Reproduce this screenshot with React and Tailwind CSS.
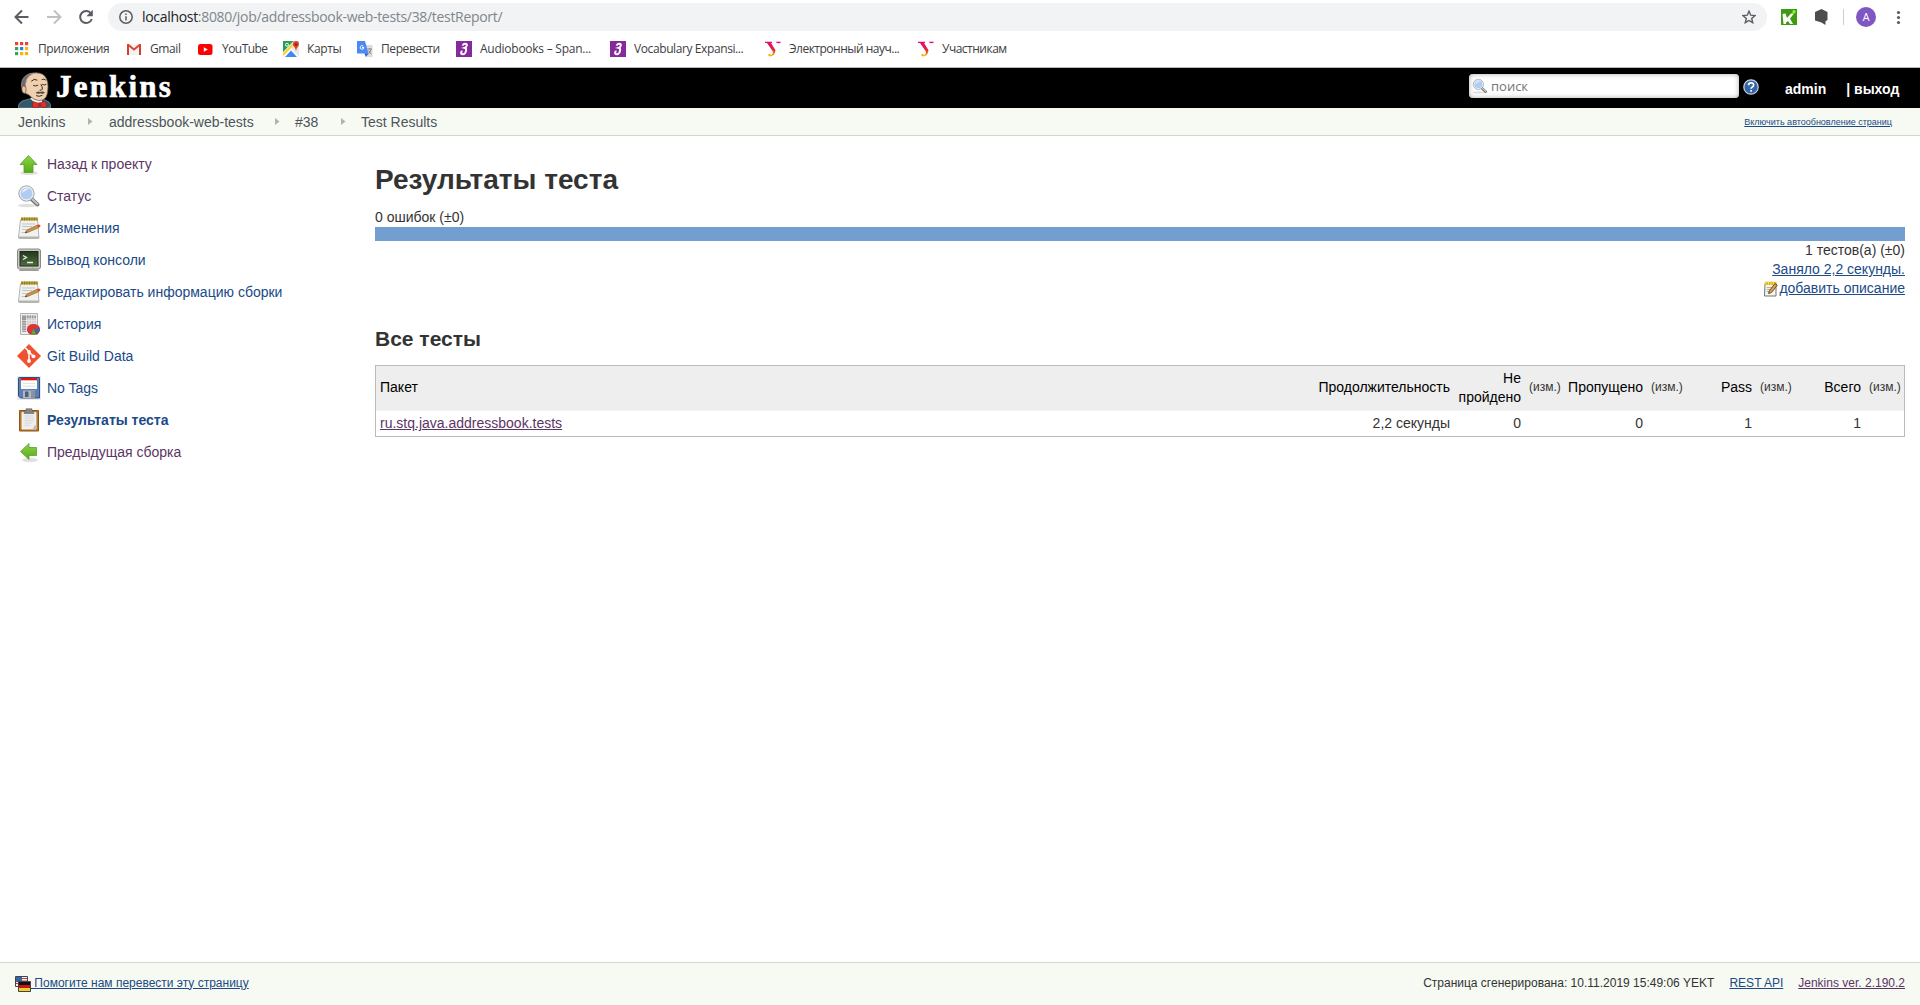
import React from 'react';

const G = ({ s = 24, w, h, vb, children, className = '' }) => (
  <svg width={w || s} height={h || s} viewBox={vb || `0 0 ${w || s} ${h || s}`} className={`block shrink-0 ${className}`}>{children}</svg>
);

/* ---------- sidebar icons ---------- */
const UpArrow = () => (
  <G>
    <ellipse cx="12" cy="21" rx="9" ry="2" fill="#000" opacity=".12" />
    <path d="M11.500 3.500 20 12.500h-4v8H7v-8H3z" fill="url(#green)" stroke="#55a020" strokeWidth=".8" />
  </G>
);
const LeftArrow = () => (
  <G>
    <ellipse cx="13" cy="20" rx="8" ry="2" fill="#000" opacity=".12" />
    <path d="M3.500 11.500 12 3.500v4h7.500v8H12v4z" fill="url(#green)" stroke="#5a9c35" strokeWidth=".8" />
  </G>
);
const Magnifier = ({ s = 24 }) => (
  <G s={s} vb="0 0 24 24">
    <ellipse cx="10" cy="21.500" rx="9" ry="1.800" fill="#000" opacity=".12" />
    <path d="m14.500 15 6 5.500" stroke="#777" strokeWidth="4" strokeLinecap="round" />
    <path d="m15 15 5.500 5" stroke="#c4c4c4" strokeWidth="1.800" strokeLinecap="round" />
    <circle cx="9.500" cy="9.500" r="7.600" fill="#b9d3f0" stroke="#8f8f8f" strokeWidth="1" />
    <circle cx="9.500" cy="9.500" r="6.500" fill="#aecdf0" stroke="#eee" strokeWidth="1.300" />
    <path d="M5 9a5 5 0 0 1 7-4.200C9 6 7 8 5 9z" fill="#e6f1fc" />
  </G>
);
const Notepad = () => (
  <G>
    <path d="M3.500 3.500h17l1.500 18q0 1-1 1H2.500q-1 0-1-1z" fill="#f1f1ef" stroke="#b5b5b0" />
    <path d="M1.500 20.500h20.500v2H1.500z" fill="#b5b5b0" />
    <path d="M4 1.500h16.500v3H4z" fill="#b39c2c" />
    <path d="M5 1.500v3M7.500 1.500v3M10 1.500v3M12.500 1.500v3M15 1.500v3M17.500 1.500v3M20 1.500v3" stroke="#8f7c1c" />
    <path d="M5 8h13M5 10.500h10M5 13.500h6M4.500 16.500h4" stroke="#c5c5c2" />
    <path d="m8 17 2-3L20.500 9l1.500 2.500L11 16.300z" fill="#cf9440" stroke="#8a6a3a" strokeWidth=".7" />
    <path d="m20 9.200 1.800-.8q2 0 1.700 2l-2 1z" fill="#e0452c" />
    <path d="m8 17 1-1.800 1.300 1z" fill="#333" />
  </G>
);
const SmallNotepad = () => (
  <G s={16}>
    <path d="M2 2.500h11v12.500H1.500z" fill="#f4f4f2" stroke="#77776f" />
    <path d="M2 .8h11.500V4H2z" fill="#e0b818" />
    <path d="M3 .8v3M5.500.8v3M8 .8v3M10.500.8v3M13 .8v3" stroke="#f7dc5a" strokeWidth=".9" />
    <path d="M3.500 6.500h7M3.500 8.500h5M3.500 10.500h3" stroke="#b5b5b2" />
    <path d="m5.500 12.500.8-2.700L12 2.500l2.300 1.700-5.800 7.300z" fill="#d5a253" stroke="#5d4218" strokeWidth=".9" />
  </G>
);
const Terminal = () => (
  <G>
    <rect x=".5" y="1" width="23" height="20" rx="2" fill="#c9c9c4" stroke="#8a8a86" />
    <path d="M3 21h18l1 2H2z" fill="#9e9e99" />
    <rect x="3" y="3.500" width="18" height="14.500" fill="url(#term)" stroke="#1f2a1a" />
    <path d="m6 7.500 3.500 2L6 11.500M10 14.500h6" stroke="#e8efe2" strokeWidth="1.300" fill="none" />
    <path d="M15.500 20h1.500" stroke="#6cce20" />
  </G>
);
const History = () => (
  <G>
    <path d="M3.500 1.500h17v21h-17z" fill="#ededed" stroke="#b0b0ad" />
    <path d="M5 3.500h14v16H5z" fill="#cbcbc9" />
    <path d="M5 4h4v16H5zM5 3.500h14v2.500H5z" fill="#8f8f8d" opacity=".8" />
    <path d="M5 8.500h14M5 11h14M5 13.500h14M5 16h14M5 18.500h14M9.500 3v17M12 3v17M14.500 3v17M17 3v17" stroke="#f1f1f0" strokeWidth=".6" />
    <path d="M10 17q0 5.500 6.500 5.500t6.500-5.500" fill="#a11515" />
    <ellipse cx="16.500" cy="17" rx="6.500" ry="5" fill="#e03434" />
    <path d="m16.500 17 6.500-.5q0 4-4 5z" fill="#3a67ad" />
    <path d="m16.500 17 2.500 5q-3 .8-5 0z" fill="#5eac22" />
  </G>
);
const Git = () => (
  <G>
    <path d="m12 .2 11.800 11.800L12 23.800.2 12z" fill="#f05133" stroke="#f05133" strokeLinejoin="round" strokeWidth=".4" />
    <path d="m8.200 3.800 3.800 3.800v9M12 8l4.300 4.300" stroke="#fff" strokeWidth="1.500" fill="none" />
    <circle cx="12" cy="7.900" r="1.900" fill="#fff" /><circle cx="12" cy="17" r="1.900" fill="#fff" /><circle cx="16.500" cy="12.300" r="1.900" fill="#fff" />
  </G>
);
const Floppy = () => (
  <G>
    <path d="M0 0h24v24H0z" fill="#e9e9ec" />
    <path d="M2 1.500h20.500v20.500H3.500L1.500 20V2z" fill="#5b80b5" stroke="#2f4f80" />
    <path d="M4 2h16v11H4z" fill="#fafafa" />
    <path d="M4 2h16v2.300H4z" fill="#d8190c" />
    <path d="M6 7.500h12M6 10.300h12" stroke="#dedede" strokeWidth=".8" />
    <path d="M6 14.500h12V22H6z" fill="#b3b7bd" /><path d="M8 15.500h3.500v5.500H8z" fill="#4a5f80" /><path d="M14 15h4v7h-4z" fill="#8e9298" />
  </G>
);
const Clipboard = () => (
  <G>
    <path d="M2.500 2.500h19v20.500h-19z" fill="#b8792b" stroke="#8b5715" />
    <path d="M5 4.500h14V21H5z" fill="#ededed" stroke="#fafafa" strokeWidth=".8" />
    <path d="M7.500 8h9M7.500 10.300h9M7.500 12.600h9M7.500 15h7M7.500 17.300h5" stroke="#d6d6d6" />
    <path d="M19.500 17v4.500H14q3-1 3-3.500z" fill="#bcbcbc" />
    <path d="M7 5.500q0-2.500 2-2.800V.8h6v1.900q2 .3 2 2.800z" fill="#81837e" stroke="#62645f" strokeWidth=".6" />
  </G>
);

const tasks = [
  { icon: UpArrow, t: 'Назад к проекту', c: 'text-[#5c3566]' },
  { icon: Magnifier, t: 'Статус', c: 'text-[#5c3566]' },
  { icon: Notepad, t: 'Изменения', c: 'text-[#204a87]' },
  { icon: Terminal, t: 'Вывод консоли', c: 'text-[#204a87]' },
  { icon: Notepad, t: 'Редактировать информацию сборки', c: 'text-[#204a87]' },
  { icon: History, t: 'История', c: 'text-[#204a87]' },
  { icon: Git, t: 'Git Build Data', c: 'text-[#204a87]' },
  { icon: Floppy, t: 'No Tags', c: 'text-[#204a87]' },
  { icon: Clipboard, t: 'Результаты теста', c: 'text-[#204a87] font-bold' },
  { icon: LeftArrow, t: 'Предыдущая сборка', c: 'text-[#5c3566]' },
];

/* ---------- bookmark icons ---------- */
const dots = ['#ea4335', '#ea4335', '#ea4335', '#34a853', '#1a84f0', '#fbb50a', '#34a853', '#fbb50a', '#fbb50a'];
const Apps = () => (
  <G s={14} className="mr-[9px]">{dots.map((c, i) => <rect key={i} x={(i % 3) * 5} y={Math.floor(i / 3) * 5} width="3.200" height="3.200" fill={c} />)}</G>
);
const Gmail = () => (
  <G w={14} h={16} className="mr-[9px]">
    <path d="M1 3h12v11H1z" fill="#f2f2f2" /><path d="M0 3h2v11H0zM12 3h2v11h-2z" fill="#d3402f" />
    <path d="m.8 3.500 6.200 5 6.200-5" fill="none" stroke="#db4437" strokeWidth="2" />
  </G>
);
const YouTube = () => (
  <G w={15} h={16} className="mr-[9px]"><rect y="3" width="14.500" height="11" rx="2.500" fill="#f00" /><path d="m5.800 6.200 4 2.300-4 2.300z" fill="#fff" /></G>
);
const Maps = () => (
  <G s={16} className="mr-[8px]">
    <path d="M0 0h16v16H0z" fill="#e8e8e6" /><path d="M0 0h10.500L0 11z" fill="#2a9d58" /><path d="m0 13.500 8-7 8 9.500H0z" fill="#fff" />
    <path d="M2 16 8 9.500l6 6.500z" fill="#4285f4" /><path d="m0 14 10.500-11" stroke="#fdd21c" strokeWidth="2" />
    <path d="M13 10q-.5-3-2-4.500T10 3a3 3 0 0 1 6 0q0 1.500-1.300 3T13 10z" fill="#e04031" /><circle cx="13" cy="3.500" r="1.200" fill="#8c2018" />
    <circle cx="4" cy="3.800" r="1.500" fill="none" stroke="#fff" strokeWidth=".9" />
  </G>
);
const Translate = () => (
  <G s={16} className="mr-[8px]">
    <path d="M6 4h9.500v12H8z" fill="#dcdcdc" /><path d="M0 0h8l3.500 12.500H0z" fill="#4a8af4" /><path d="m7.500 12.500 4 0-2.500 3.300z" fill="#2a56c6" />
    <path d="M6.800 6.500a1.800 1.800 0 1 1-.6-1.400M5 6.500h2" stroke="#fff" fill="none" strokeWidth="1" />
    <path d="M10.500 8h4.500M12.700 7v1M14 8.500q-.5 3-3 4.500M11.500 9.500q1 2 3 3.500" stroke="#6f7f88" strokeWidth=".9" fill="none" />
  </G>
);
const Purple = () => (
  <G s={16} className="mr-[8px]">
    <path d="M0 0h16v16H0z" fill="#862a9b" />
    <path d="M6.500 4.600q1-1.800 2.700-1.800 2 0 1.700 1.700-.4 1.600-2.400 2.300 2 .4 1.600 2.800-.6 3.300-3 3.700-2 .1-2.100-1.400 0-1.400 1.500-1.600" fill="none" stroke="#fff" strokeWidth="1.900" />
  </G>
);
const YLogo = () => (
  <G s={16} className="mr-[8px]">
    <path d="M0 .8h7v1.300H6l4.500 7.200q-.8 6.200-5.200 6.200-2.200 0-2.200-2l1.700-.5q.8 1.200 1.800.7 1.500-.8 1.300-3.300L2 2.100H0z" fill="url(#yg)" />
    <path d="M10.500.8H16q-.5 1.500-2.300 1.500T10.500.8z" fill="#e5067d" />
  </G>
);
const bookmarks = [
  { i: Apps, t: 'Приложения', w: 'w-[112px]', s: 'tracking-[-0.4px]' },
  { i: Gmail, t: 'Gmail', w: 'w-[71px]', s: 'tracking-[-0.4px]' },
  { i: YouTube, t: 'YouTube', w: 'w-[85px]', s: 'tracking-[-0.55px]' },
  { i: Maps, t: 'Карты', w: 'w-[74px]', s: 'tracking-[-0.4px]' },
  { i: Translate, t: 'Перевести', w: 'w-[99px]', s: 'tracking-[-0.4px]' },
  { i: Purple, t: 'Audiobooks – Span...', w: 'w-[154px]', s: 'tracking-[-0.25px]' },
  { i: Purple, t: 'Vocabulary Expansi...', w: 'w-[155px]', s: 'tracking-[-0.4px]' },
  { i: YLogo, t: 'Электронный науч...', w: 'w-[153px]', s: 'tracking-[-0.5px]' },
  { i: YLogo, t: 'Участникам', w: 'w-[100px]', s: 'tracking-[-0.5px]' },
];

const Butler = () => (
  <G w={34} h={36}>
    <path d="M0 36q.5-5.500 4-7l7-2 14 0 6 3q2 2 1.500 6z" fill="#35576b" stroke="#7d97a5" strokeWidth=".7" />
    <path d="m12 26 12 0 0 5-5 3z" fill="#f2f0ee" />
    <path d="M5 20Q2.500 13 5.500 7.500 9 .8 18 .8q8 .2 10.500 6 1.500 3.500 1.500 8-.2 8-2.500 11-2.500 3-7 2.700-5.500-.6-9.500-5.500z" fill="#f0d0ae" stroke="#6b6258" strokeWidth=".8" />
    <path d="M3.500 15Q2.800 7 8 3.500 11.500.8 16 1.200q-5.500 2-7.500 6.500-.5 3-1 4.500l.5 3.500z" fill="#6e6c6c" stroke="#a5a19c" strokeWidth=".6" />
    <path d="M4 14.500q3.500-1.500 4 2 .5 4-1.500 5-3.500-1-2.500-7z" fill="#e8c6a3" stroke="#5a4a3e" strokeWidth=".7" />
    <path d="M13.500 9q2.500-3 5.500-1M24 7.500q2-1.200 3.500.3M15.500 13.500q2.200 1.300 4.300-.2M24.500 12.500q1.800 1.200 3.500 0M23 12.500q2.500 4.500.5 5.500l-1.500.2M18.500 23.800q2.500 1.300 5.500-.3" fill="none" stroke="#3a2d25" strokeWidth="1" strokeLinecap="round" />
    <path d="M17.500 21q2.300-2.500 4.500-1 2.800-1.300 5 .7-2.500 1.700-5 .5-2 1.200-4.500-.2z" fill="#4a4745" />
    <path d="m15 29.500 6 2 6-2.500q2 2.500 1.500 6.500H25l-3-1.500-3.500 2H15q-1-3.500 0-6.500z" fill="#e0302c" stroke="#7e1f1a" strokeWidth=".6" />
    <rect x="20" y="30.500" width="3.500" height="4" rx="1" fill="#b8231f" />
  </G>
);
const Crumb = () => <G w={5} h={8}><path d="M0 0v7l4.500-3.500z" fill="#b0b3ac" /></G>;

const TopBar = () => (
  <div className="h-[68px] border-b border-[#b6b6b6] bg-white font-['Open_Sans',sans-serif]">
    <div className="flex h-[34px] items-center">
      <G w={108} h={34}>
        <g fill="none" stroke="#5a5e63" strokeWidth="2">
          <path d="M28.500 17H16M22 10.500 15.500 17l6.500 6.500" />
          <path d="M47 17h12.500M54 10.500l6.500 6.500-6.500 6.500" stroke="#bfc1c3" />
          <path d="M91 13.500A6 6 0 1 0 91.800 19" />
        </g>
        <path d="M92.800 9.800v6.400h-6.400z" fill="#5a5e63" />
      </G>
      <div className="flex h-[28px] w-[1659px] items-center rounded-full bg-[#f1f3f4] pl-[11px] pr-[11px]">
        <G s={14}><g fill="none" stroke="#5a5e63" strokeWidth="1.500"><circle cx="7" cy="7" r="6.200" /><path d="M7 6.200v4.300M7 3.500v1.500" /></g></G>
        <span className="ml-[9px] text-[14px] leading-[20px] tracking-[-0.31px] text-[#80868b]"><span className="text-[#202124]">localhost</span>:8080/job/addressbook-web-tests/38/testReport/</span>
        <G s={14} className="ml-auto"><path d="m7 1.200 1.700 4 4.300.4-3.300 2.900 1 4.200L7 10.500l-3.700 2.200 1-4.200L1 5.600l4.300-.4z" fill="none" stroke="#5a5e63" strokeWidth="1.400" /></G>
      </div>
      <G w={153} h={34}>
        <path d="M14 9h16v16H14z" fill="#3f9a12" />
        <path d="m15.500 14 3-.5 1.500 4.500 4-4.500h3l-4 5 3 5.500h-3l-2-3-2 1.500v1.500h-2.500z" fill="#fff" /><circle cx="27" cy="11.800" r="1.700" fill="#7dff18" />
        <path d="m54.500 9 6 3v8l-2 1.200V25L54.500 22.500 48 20.500V12z" fill="#4d4d4d" />
        <path d="M76.500 9v16" stroke="#cdcdcd" />
        <circle cx="99" cy="17" r="10" fill="#7e57c2" />
        <text x="99" y="21" fontSize="11" fontFamily="Roboto, sans-serif" textAnchor="middle" fill="#fff">A</text>
        <g fill="#5a5e63"><circle cx="131.500" cy="12.500" r="1.600" /><circle cx="131.500" cy="17.500" r="1.600" /><circle cx="131.500" cy="22.500" r="1.600" /></g>
      </G>
    </div>
    <div className="flex h-[30px] items-center pl-[15px] text-[12px] text-[#3c4043]">
      {bookmarks.map((b, k) => { const I = b.i; return <div key={k} className={`flex shrink-0 items-center whitespace-nowrap ${b.w} ${b.s}`}><I /><span className="pb-px">{b.t}</span></div>; })}
    </div>
  </div>
);

const cols = [
  ['Пакет', 'ru.stq.java.addressbook.tests'], ['Продолжительность', '2,2 секунды'], ['Не пройдено', '0'], ['(изм.)', ''],
  ['Пропущено', '0'], ['(изм.)', ''], ['Pass', '1'], ['(изм.)', ''], ['Всего', '1'], ['(изм.)', ''],
];
const grid = 'grid grid-cols-[938px_140px_71px_39px_83px_39px_70px_39px_70px_39px]';

export default function App() {
  return (
    <div className="flex h-[1005px] w-[1920px] flex-col overflow-hidden bg-white font-['Liberation_Sans',Arial,sans-serif] text-[14px] leading-[19px] text-[#333]">
      <svg width="0" height="0" className="absolute">
        <defs>
          <linearGradient id="green" x1="0" y1="0" x2="0" y2="1"><stop offset="0" stopColor="#8fd44a" /><stop offset="1" stopColor="#55ac14" /></linearGradient>
          <linearGradient id="term" x1="0" y1="0" x2="0" y2="1"><stop offset="0" stopColor="#24381c" /><stop offset="1" stopColor="#4e6e3e" /></linearGradient>
          <linearGradient id="yg" x1="0" y1="0" x2="0" y2="1"><stop offset="0" stopColor="#e5067d" /><stop offset=".55" stopColor="#e32530" /><stop offset="1" stopColor="#fbd000" /></linearGradient>
        </defs>
      </svg>
      <TopBar />
      <header className="flex h-[40px] shrink-0 bg-black text-white">
        <div className="flex h-[40px] w-[1469px] overflow-hidden pl-[18px] pt-[4px]">
          <Butler />
          <span className="-mt-[2px] ml-[4px] font-['Liberation_Serif',serif] text-[31px] font-bold leading-[34px] tracking-[2.2px] [-webkit-text-stroke:0.6px_white]">Jenkins</span>
        </div>
        <div className="mt-[6px] flex h-[24px] w-[270px] items-center rounded-[4px] bg-white pl-[3px] shadow-[inset_0_0_5px_#aaa]">
          <Magnifier s={16} />
          <span className="ml-[3px] font-['Open_Sans',sans-serif] text-[13px] text-[#757575]">поиск</span>
        </div>
        <G s={16} className="ml-[4px] mt-[11px]">
          <circle cx="8" cy="8" r="7.200" fill="#3465a4" stroke="#c6d4e8" strokeWidth="1.200" />
          <path d="M5.500 6.300q0-2.500 2.600-2.500t2.500 2.200q0 1.300-1.300 2-1.200.6-1.200 1.700M8.100 11v1.700" fill="none" stroke="#fff" strokeWidth="1.700" />
        </G>
        <span className="ml-[26px] mt-[12px] font-bold">admin</span>
        <span className="ml-[20px] mt-[12px] font-bold">| выход</span>
      </header>
      <nav className="flex h-[28px] shrink-0 items-center border-b border-[#d3d7cf] bg-[#f6faf2] pl-[18px] pt-px text-[#4d545d]">
        <span className="w-[70px]">Jenkins</span><Crumb />
        <span className="ml-[16px] w-[166px]">addressbook-web-tests</span><Crumb />
        <span className="ml-[15px] w-[46px]">#38</span><Crumb />
        <span className="ml-[15px]">Test Results</span>
        <span className="ml-auto mr-[28px] text-[9px] text-[#204a87] underline">Включить автообновление страниц</span>
      </nav>
      <div className="flex flex-1">
        <aside className="w-[375px] pl-[17px] pt-[12px]">
          {tasks.map((x, k) => { const I = x.icon; return <div key={k} className={`flex h-[32px] items-center gap-[6px] ${x.c}`}><I /><span>{x.t}</span></div>; })}
        </aside>
        <main className="w-[1530px] pt-[26px]">
          <h1 className="text-[28px] font-bold leading-[36px]">Результаты теста</h1>
          <p className="mt-[10px]">0 ошибок (±0)</p>
          <div className="h-[14px] bg-[#729fcf]" />
          <div className="flex flex-col items-end">
            <span>1 тестов(а) (±0)</span>
            <span className="text-[#204a87] underline">Заняло 2,2 секунды.</span>
            <span className="flex items-center text-[#204a87]"><SmallNotepad /><span className="underline">добавить описание</span></span>
          </div>
          <h2 className="mt-[28px] text-[21px] font-bold leading-[26px]">Все тесты</h2>
          <div className="mt-[13px] border border-[#bbb]">
            <div className={`${grid} h-[45px] items-center border-b border-[#f4f4f4] bg-[#eee] pb-px text-black`}>
              {cols.map((c, k) => <span key={k} className={`px-[4px] ${k ? 'text-right' : ''} ${c[0] === '(изм.)' ? 'text-[12px] text-[#333]' : ''}`}>{c[0]}</span>)}
            </div>
            <div className={`${grid} h-[25px] items-center`}>
              {cols.map((c, k) => <span key={k} className={`px-[4px] ${k ? 'text-right' : 'text-[#5c3566] underline'}`}>{c[1]}</span>)}
            </div>
          </div>
        </main>
      </div>
      <footer className="flex h-[43px] shrink-0 items-center border-t border-[#d3d7cf] bg-[#f6faf2] pb-[2px] pl-[15px] pr-[15px] text-[12px]">
        <G s={16} className="mt-px">
          <path d="M.5.500h12v10H.5z" fill="#f3f3f3" stroke="#444" /><path d="M1 1h6v5H1z" fill="#3465a4" /><path d="M7 2.500h5M7 5h5M1 7.500h11" stroke="#cc3b3b" />
          <path d="M3.500 5.500h12v10h-12z" fill="#111" stroke="#444" /><path d="M4 9h11v3H4z" fill="#c81414" /><path d="M4 12h11v3H4z" fill="#efcf2a" />
        </G>
        <span className="whitespace-pre text-[#204a87] underline"> Помогите нам перевести эту страницу</span>
        <span className="ml-auto">Страница сгенерирована: 10.11.2019 15:49:06 YEKT</span>
        <span className="ml-[15px] text-[#204a87] underline">REST API</span>
        <span className="ml-[15px] text-[#5c3566] underline">Jenkins ver. 2.190.2</span>
      </footer>
    </div>
  );
}
